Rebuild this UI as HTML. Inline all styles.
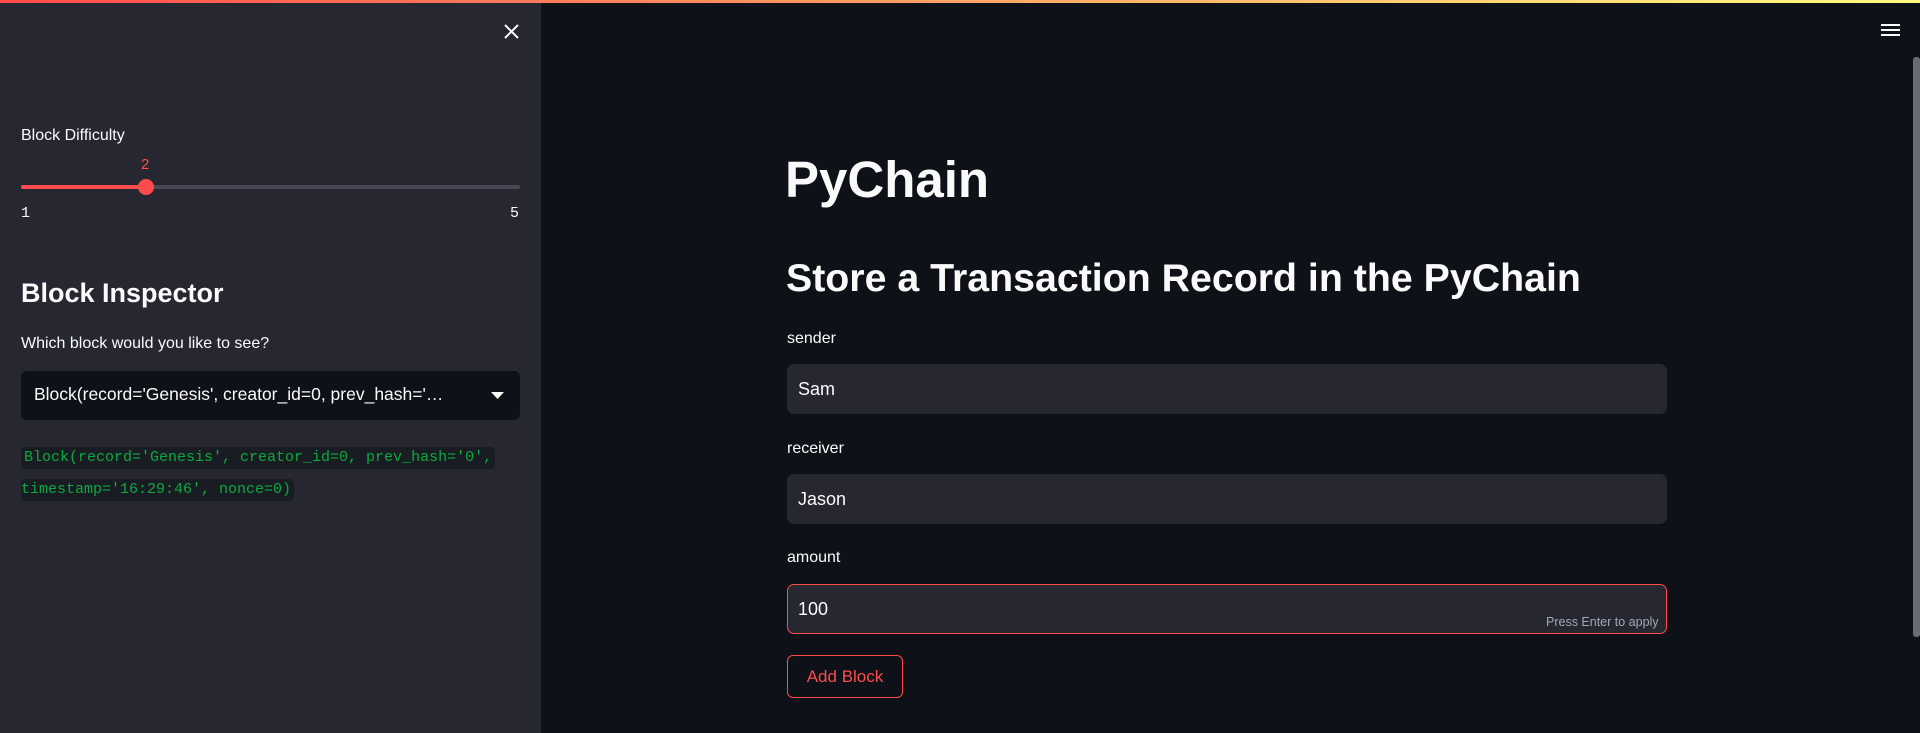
<!DOCTYPE html>
<html><head><meta charset="utf-8"><style>
*{margin:0;padding:0;box-sizing:border-box}
body{width:1920px;height:733px;overflow:hidden;background:#0e1117;font-family:"Liberation Sans",sans-serif;color:#fafafa;position:relative}
.topbar{position:absolute;left:0;top:0;width:1920px;height:3px;background:linear-gradient(90deg,#ff4b4b,#fffd80)}
.side{position:absolute;left:0;top:3px;width:541px;height:730px;background:#262730}
.a{position:absolute;white-space:nowrap}
.inp{position:absolute;left:787px;width:880px;height:50px;background:#262730;border-radius:7px;font-size:18px;padding-left:11px;line-height:50px}
.lbl{position:absolute;left:787px;font-size:16px}
.code{position:absolute;left:21px;background:#1a1c24;color:#09ab3b;font-family:"Liberation Mono",monospace;font-size:15px;height:22px;line-height:22px;padding:0 3px;border-radius:4px;white-space:nowrap}
</style></head><body>
<div class="topbar"></div>
<div class="side"></div>
<svg class="a" style="left:503px;top:23px" width="17" height="17" viewBox="0 0 17 17"><path d="M2 2L15 15M15 2L2 15" stroke="#fafafa" stroke-width="2"/></svg>
<div class="a" style="left:21px;top:127px;font-size:16px">Block Difficulty</div>
<div class="a" style="left:141px;top:156px;font-size:15px;color:#ff4b4b">2</div>
<div class="a" style="left:21px;top:185px;width:499px;height:4px;background:#474853;border-radius:2px"></div>
<div class="a" style="left:21px;top:185px;width:125px;height:4px;background:#ff4b4b;border-radius:2px"></div>
<div class="a" style="left:138px;top:179px;width:16px;height:16px;background:#ff4b4b;border-radius:50%"></div>
<div class="a" style="left:21px;top:205px;font-size:15px;font-family:'Liberation Mono',monospace">1</div>
<div class="a" style="left:510px;top:205px;font-size:15px;font-family:'Liberation Mono',monospace">5</div>
<div class="a" style="left:21px;top:278px;font-size:27px;font-weight:bold">Block Inspector</div>
<div class="a" style="left:21px;top:335px;font-size:16px">Which block would you like to see?</div>
<div class="a" style="left:21px;top:371px;width:499px;height:49px;background:#0e1117;border-radius:6px"></div>
<div class="a" style="left:34px;top:384px;font-size:17.5px">Block(record='Genesis', creator_id=0, prev_hash='…</div>
<svg class="a" style="left:491px;top:392px" width="13" height="8"><path d="M0 0H13L6.5 7Z" fill="#fafafa"/></svg>
<div class="code" style="top:447px">Block(record='Genesis', creator_id=0, prev_hash='0',</div>
<div class="code" style="top:479px;padding-left:0">timestamp='16:29:46', nonce=0)</div>
<div class="a" style="left:1881px;top:24px;width:19px;height:2px;background:#fafafa;box-shadow:0 5px 0 #fafafa,0 10px 0 #fafafa"></div>
<div class="a" style="left:1913px;top:57px;width:7px;height:580px;background:#6b6c70;border-radius:3px"></div>
<div class="a" style="left:785px;top:150px;font-size:51px;font-weight:bold">PyChain</div>
<div class="a" style="left:786px;top:256px;font-size:39.3px;font-weight:bold">Store a Transaction Record in the PyChain</div>
<div class="lbl" style="top:330px">sender</div>
<div class="inp" style="top:364px">Sam</div>
<div class="lbl" style="top:440px">receiver</div>
<div class="inp" style="top:474px">Jason</div>
<div class="lbl" style="top:549px">amount</div>
<div class="inp" style="top:584px;border:1px solid #ff4b4b;padding-left:10px;line-height:48px">100</div>
<div class="a" style="left:1546px;top:615px;font-size:12.5px;color:#a3a8b4">Press Enter to apply</div>
<div class="a" style="left:787px;top:655px;width:116px;height:43px;border:1px solid #ff4b4b;border-radius:6px;color:#ff4b4b;font-size:17px;text-align:center;line-height:41px">Add Block</div>
</body></html>
